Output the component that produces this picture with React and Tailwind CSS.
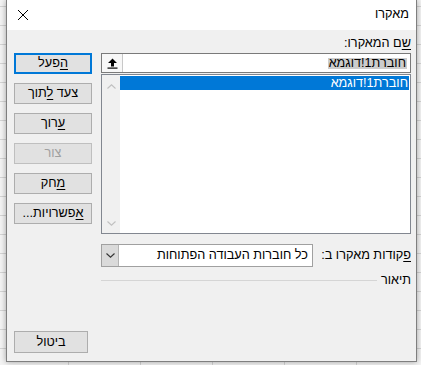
import React from 'react';

const font = "font-['Segoe_UI','Liberation_Sans',sans-serif] text-[12.7px]";

const Btn = ({ children, kind = 'normal', className = '' }) => {
    const look =
        kind === 'primary'
            ? 'border-2 border-[#0078d7] bg-[#e1e1e1] text-black'
            : kind === 'disabled'
            ? 'border border-[#bfbfbf] bg-[#e1e1e1] text-[#a0a0a0]'
            : 'border border-[#adadad] bg-[#e1e1e1] text-black';
    return (
        <div dir="rtl" className={`flex items-center justify-center leading-none ${look} ${className}`}>
            <span>{children}</span>
        </div>
    );
};

const U = ({ children }) => <span className="underline underline-offset-2">{children}</span>;

const Chevron = ({ up, color }) => (
    <svg width="9" height="5" viewBox="0 0 9 5">
        <path d={up ? 'M0.5 4.5 L4.5 0.8 L8.5 4.5' : 'M0.5 0.5 L4.5 4.2 L8.5 0.5'} fill="none" stroke={color} strokeWidth="1.1" />
    </svg>
);

export default function App() {
    return (
        <div className={`w-[421px] h-[365px] overflow-hidden bg-[#f4f4f4] bg-[linear-gradient(#d4d4d4_1px,transparent_1px),linear-gradient(90deg,#d4d4d4_1px,transparent_1px)] bg-[size:72px_19px] bg-[position:68px_6px] pl-[6px] ${font}`}>
            <div className="w-[411px] h-[362px] flex flex-col border-x border-b border-[#7f7f7f] shadow-[0_0_6px_rgba(0,0,0,0.35)]">
                {/* Title bar */}
                <div className="h-[30px] bg-white flex items-center justify-between pl-[10px] pr-[7px]">
                    <svg width="12" height="12" viewBox="0 0 12 12">
                        <path d="M1 1 L11 11 M11 1 L1 11" stroke="#000" strokeWidth="1" />
                    </svg>
                    <span dir="rtl" className="text-[12.7px] text-black">מאקרו</span>
                </div>

                {/* Body */}
                <div className="flex-1 bg-[#f0f0f0] flex pl-[7px] pr-[5px]">
                    {/* Buttons */}
                    <div className="w-[78px] flex flex-col pt-[23px] pb-[8px]">
                        <div className="flex flex-col gap-[9px]">
                            <Btn kind="primary" className="h-[21px]"><U>ה</U>פעל</Btn>
                            <Btn className="h-[21px]">צעד <U>ל</U>תוך</Btn>
                            <Btn className="h-[21px]"><U>ע</U>רוך</Btn>
                            <Btn kind="disabled" className="h-[21px]">צור</Btn>
                            <Btn className="h-[21px]"><U>מ</U>חק</Btn>
                            <Btn className="h-[21px]"><U>א</U>פשרויות...</Btn>
                        </div>
                        <Btn className="h-[22px] w-[74px] mt-auto">ביטול</Btn>
                    </div>

                    {/* Right column */}
                    <div className="w-[310px] ml-[9px] flex flex-col pt-[6px]">
                        <div dir="rtl" className="h-[15px] leading-[15px] mb-[2px] text-black">
                            <U>ש</U>ם המאקרו:
                        </div>

                        {/* Name input */}
                        <div className="h-[20px] flex border border-[#7a7a7a] bg-white">
                            <div className="w-[21px] h-full flex items-center justify-center border-r border-[#c8c8c8] bg-[#f7f7f7]">
                                <svg width="11" height="11" viewBox="0 0 11 11">
                                    <path d="M5.5 0.5 L10 5 L7 5 L7 8.5 L4 8.5 L4 5 L1 5 Z" fill="#000" />
                                    <rect x="0.5" y="9.5" width="10" height="1.2" fill="#000" />
                                </svg>
                            </div>
                            <div className="flex-1 flex items-center justify-end pr-[3px]">
                                <span dir="rtl" className="bg-[#cccccc] text-black leading-[11px] h-[11px] px-[1px]">חוברת1!דוגמא</span>
                            </div>
                        </div>

                        {/* Macro list */}
                        <div className="h-[160px] mt-px flex border border-[#828790] bg-white">
                            <div className="w-[18px] h-full bg-[#f0f0f0] flex flex-col items-center justify-between pt-[9px] pb-[7px]">
                                <Chevron up color="#c0c0c0" />
                                <Chevron color="#c0c0c0" />
                            </div>
                            <div className="flex-1 pt-[1px] pr-px">
                                <div dir="rtl" className="h-[14px] leading-[14px] bg-[#0078d7] text-white pr-[1px]">חוברת1!דוגמא</div>
                            </div>
                        </div>

                        {/* Macros in */}
                        <div className="mt-[10px] h-[23px] flex items-center">
                            <div className="w-[212px] h-full flex border border-[#a0a0a0] bg-white">
                                <div className="w-[17px] h-full bg-[#dadada] border-r border-[#b4b4b4] flex items-center justify-center">
                                    <Chevron color="#333333" />
                                </div>
                                <div dir="rtl" className="flex-1 flex items-center pr-[4px] text-black">כל חוברות העבודה הפתוחות</div>
                            </div>
                            <div dir="rtl" className="flex-1 text-black">
                                <U>פ</U>קודות מאקרו ב:
                            </div>
                        </div>

                        {/* Description */}
                        <div className="mt-[6px] h-[14px] flex items-center">
                            <div className="flex-1 h-px bg-[#d5d5d5] mr-[4px]" />
                            <div dir="rtl" className="text-black leading-[14px]">תיאור</div>
                        </div>
                    </div>
                </div>
            </div>
        </div>
    );
}
